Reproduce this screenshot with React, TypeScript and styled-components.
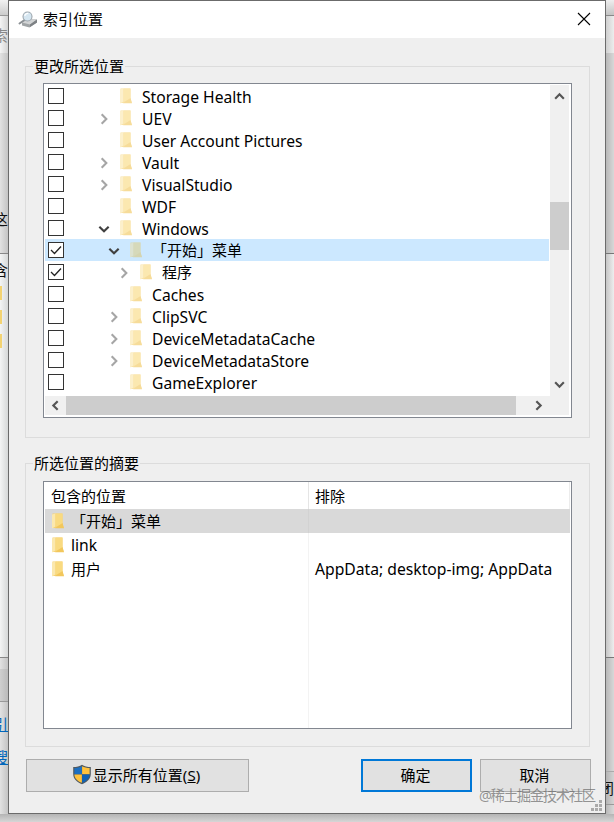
import React from 'react';
import styled, { createGlobalStyle, css } from 'styled-components';

const Global = createGlobalStyle`
  * { box-sizing: border-box; }
  body { margin: 0; overflow: hidden; background: #d9d9d9; }
`;

const Desktop = styled.div`
  width: 614px; height: 822px; position: relative; overflow: hidden;
  display: grid; grid-template-columns: 8px 598px 8px; grid-template-rows: 814px 8px;
  font: 15px/22px "Noto Sans", "Noto Sans CJK SC", sans-serif;
  color: #000;
`;

const Strip = styled.div`
  display: flex; flex-direction: column; height: 814px; min-width: 0;
`;

const Piece = styled.div<{ $h: number; $bg: string; $line?: string; $shift?: number; $color?: string; $underline?: boolean }>`
  flex: none; height: ${p => p.$h}px; background: ${p => p.$bg};
  display: flex; align-items: center; overflow: hidden; white-space: nowrap;
  justify-content: flex-end; text-indent: ${p => p.$shift ?? 0}px;
  color: ${p => p.$color ?? '#111'};
  text-decoration: ${p => (p.$underline ? 'underline' : 'none')};
  ${p => p.$line && css`border-bottom: 1px solid ${p.$line};`}
`;
const FolderEdge = styled.span`
  width: 2px; height: 14px; margin-right: auto; background: #f3d372;
`;

const BottomShade = styled.div`
  grid-column: 1 / -1; background: linear-gradient(#b4b4b4, #d6d6d6);
`;

const Dialog = styled.main`
  width: 598px; height: 814px; background: #efefef; border: 1px solid #6b6b6b;
  display: flex; flex-direction: column; align-items: stretch;
`;

const TitleBar = styled.header`
  height: 37px; flex: none; background: #fff; display: flex; align-items: center; padding: 0 14px 0 9px;
`;
const Title = styled.h1`
  flex: 1; margin: 0 0 1px 5px; font-size: 15px; font-weight: 400; line-height: 20px;
`;
const CloseButton = styled.button`
  border: 0; background: none; padding: 0; margin-bottom: 1px; display: flex;
`;

const Group = styled.fieldset<{ $h: number; $top: number }>`
  flex: none; min-width: 0; height: ${p => p.$h}px; margin: ${p => p.$top}px 15px 0 16px;
  padding: 0 17px; border: 1px solid #dcdcdc;
`;
const Legend = styled.legend`
  padding: 0 1px; margin-left: -10px; height: 22px; line-height: 22px;
`;

const Tree = styled.div`
  width: 529px; height: 335px; margin-top: 6px; border: 1px solid #828790; background: #fff;
  display: grid; grid-template-columns: 505px 20px; grid-template-rows: 311px 20px; padding: 1px;
`;
const Rows = styled.div`
  background: #fff; overflow: hidden;
`;
const Row = styled.div<{ $selected?: boolean }>`
  height: 22px; width: 504px; display: flex; align-items: center; padding-left: 3px;
  background: ${p => (p.$selected ? '#cce8ff' : 'transparent')};
`;
const Check = styled.span`
  width: 16px; height: 16px; flex: none; border: 1px solid #333; background: #fff; display: flex;
`;
const Arrow = styled.span<{ $level: number }>`
  width: 16px; height: 22px; flex: none; margin-left: ${p => 31.5 + p.$level * 10}px; margin-right: 0.5px;
  display: flex; align-items: center; justify-content: center; padding-top: 2px;
`;
const FolderSlot = styled.span`
  width: 14px; height: 16px; flex: none; margin-left: 7px; display: flex;
`;
const Label = styled.span<{ $latin: boolean }>`
  margin-left: 9px; white-space: pre; line-height: 22px; font-size: ${p => (p.$latin ? 15.65 : 15)}px;
  padding-top: ${p => (p.$latin ? 2 : 0)}px;
`;

const VBar = styled.div`
  background: #f0f0f0; width: 19px; display: flex; flex-direction: column; align-items: center;
`;
const HBar = styled.div`
  background: #f0f0f0; height: 19px; grid-column: 1 / -1; width: 524px; display: flex; align-items: center;
`;
const Cap = styled.span<{ $w: number; $h: number }>`
  width: ${p => p.$w}px; height: ${p => p.$h}px; flex: none; display: flex; align-items: center; justify-content: center;
  padding-right: 1px;
`;
const Thumb = styled.span<{ $w: number; $h: number }>`
  width: ${p => p.$w}px; height: ${p => p.$h}px; flex: none; background: #cdcdcd;
`;

const Table = styled.div`
  width: 529px; height: 248px; margin-top: 7px; border: 1px solid #828790; background: #fff; padding: 0 1px;
  display: flex; flex-direction: column;
`;
const TableRow = styled.div<{ $h?: number; $selected?: boolean }>`
  display: grid; grid-template-columns: 264px 1fr; height: ${p => p.$h ?? 24}px; flex: none;
  background: ${p => (p.$selected ? '#d9d9d9' : 'transparent')};
`;
const Cell = styled.div<{ $divider?: string; $latin?: boolean }>`
  display: flex; align-items: center; padding-left: 6px; white-space: pre;
  font-size: ${p => (p.$latin ? 15.7 : 15)}px;
  ${p => p.$divider && css`border-right: 1px solid ${p.$divider};`}
`;
const CellText = styled.span`
  margin-left: 6px;
`;
const Filler = styled.div`
  flex: 1; width: 264px; border-right: 1px solid #f3f3f3;
`;

const Actions = styled.footer`
  display: flex; gap: 8px; margin: 12px 14px 0 17px; height: 33px;
`;
const Button = styled.button<{ $w: number; $primary?: boolean; $push?: boolean }>`
  width: ${p => p.$w}px; height: 33px; padding: 0 2px 2px 0; background: #e1e1e1; color: #000; font: inherit;
  border: ${p => (p.$primary ? '2px solid #0078d7' : '1px solid #adadad')};
  display: flex; align-items: center; justify-content: center;
  margin-left: ${p => (p.$push ? 'auto' : '0')};
`;

const Watermark = styled.div`
  position: absolute; left: 479px; top: 786px; font-size: 14.4px; line-height: 20px; white-space: nowrap;
  letter-spacing: -1.35px; color: rgba(110, 110, 110, 0.72);
`;
const Grip = styled.svg`
  position: absolute; left: 591px; top: 800px;
`;

const Folder = ({ faded = true, tint }: { faded?: boolean; tint?: boolean }) => (
  <svg width="14" height="16" viewBox="0 0 14 16" opacity={faded ? 0.62 : 1}>
    <path d="M1.500 .5h10v10l1.300 4.500H1.500z" fill={tint ? '#d8cf96' : '#f5d071'} />
    <path d="M1 1.500L4.500 .5v13l-3.500 2z" fill={tint ? '#e6dfb5' : '#fbe8ae'} />
    <path d="M4.500 .5h7v10L4.500 14z" fill={tint ? '#ddd190' : '#f9da80'} />
    <path d="M11.500 10l1.500 5.200H4z" fill={tint ? '#d9c981' : '#f2c75c'} />
  </svg>
);

type Direction = 'up' | 'down' | 'left' | 'right';
const PATHS: Record<Direction, string> = {
  up: 'M2 8l4-4 4 4', down: 'M2 4l4 4 4-4', left: 'M8 2L4 6l4 4', right: 'M4 2l4 4-4 4',
};
const Chevron = ({ dir, color = '#555', size = 12, weight = 2 }: { dir: Direction; color?: string; size?: number; weight?: number }) => (
  <svg width={size} height={size} viewBox="0 0 12 12" fill="none" stroke={color} strokeWidth={weight}>
    <path d={PATHS[dir]} />
  </svg>
);

const DriveIcon = () => (
  <svg width="20" height="18" viewBox="0 0 20 18">
    <path d="M4 11.500l6-3.500 9 .5v3L11.500 16.500 4 14.500z" fill="#a0a4a6" />
    <path d="M4 11.500l6-3.500 9 .5-7 5z" fill="#d2d4d5" />
    <path d="M12 13.500l7-5V11.500L12 16z" fill="#7d8184" />
    <path d="M6.500 9L1.500 12.500" stroke="#8b9094" strokeWidth="2" strokeLinecap="round" />
    <circle cx="9.500" cy="5.500" r="4.500" fill="#d5e6f1" stroke="#9da6ad" strokeWidth="1.100" />
    <path d="M6.800 5a3 3 0 0 1 3.500-2.500" fill="none" stroke="#fff" strokeWidth="1.300" />
  </svg>
);

const Shield = () => (
  <svg width="20" height="21" viewBox="0 0 20 21">
    <path d="M9 .7C6.800 2.200 3.500 3 .2 3v7c0 5 4 8.300 8.800 10.200 4.800-1.900 8.800-5.200 8.800-10.200V3C14.500 3 11.200 2.200 9 .7z" fill="#515a60" />
    <path d="M8.900 2.200C6.800 3.400 4 4 1.400 4.100v6.100h7.500z" fill="#1d6fc0" />
    <path d="M9.100 2.200c2 1.200 4.900 1.800 7.500 1.900v6.100h-7.500z" fill="#ffc23c" />
    <path d="M1.400 10.400h7.500v8.400C4.500 17 1.500 14.500 1.400 10.400z" fill="#ffc23c" />
    <path d="M16.600 10.400h-7.500v8.400c4.400-1.800 7.400-4.300 7.500-8.400z" fill="#0f62b5" />
  </svg>
);

interface Node { name: string; level: number; arrow?: 'right' | 'down'; checked?: boolean; selected?: boolean }
const NODES: Node[] = [
  { name: 'Storage Health', level: 0 },
  { name: 'UEV', level: 0, arrow: 'right' },
  { name: 'User Account Pictures', level: 0 },
  { name: 'Vault', level: 0, arrow: 'right' },
  { name: 'VisualStudio', level: 0, arrow: 'right' },
  { name: 'WDF', level: 0 },
  { name: 'Windows', level: 0, arrow: 'down' },
  { name: '「开始」菜单', level: 1, arrow: 'down', checked: true, selected: true },
  { name: '程序', level: 2, arrow: 'right', checked: true },
  { name: 'Caches', level: 1 },
  { name: 'ClipSVC', level: 1, arrow: 'right' },
  { name: 'DeviceMetadataCache', level: 1, arrow: 'right' },
  { name: 'DeviceMetadataStore', level: 1, arrow: 'right' },
  { name: 'GameExplorer', level: 1 },
];

const LOCATIONS = [
  { name: '「开始」菜单', excluded: '', selected: true },
  { name: 'link', excluded: '' },
  { name: '用户', excluded: 'AppData; desktop-img; AppData' },
];

const isLatin = (s: string) => /^[\x20-\x7e]+$/.test(s);

const SHADE = 'linear-gradient(90deg, #e2e2e2, #c4c4c4)';
const PALE = 'linear-gradient(90deg, #f4f5f5, #d6d8d8)';
const SHADE_R = 'linear-gradient(90deg, #b8b8b8, #d8d8d8)';

export default function App() {
  return (
    <>
      <Global />
      <Desktop>
        <Strip>
          <Piece $h={16} $bg="linear-gradient(#f2f2f2, #cccccc)" $line="#999" />
          <Piece $h={37} $bg="linear-gradient(90deg, #f4f4f4, #d4d4d4)" $color="#888">索</Piece>
          <Piece $h={154} $bg={SHADE} />
          <Piece $h={23} $bg={SHADE}>这</Piece>
          <Piece $h={24} $bg={SHADE} $line="#888" />
          <Piece $h={4} $bg={PALE} />
          <Piece $h={24} $bg={PALE}>包含</Piece>
          <Piece $h={4} $bg={PALE} />
          <Piece $h={14} $bg={PALE}><FolderEdge /></Piece>
          <Piece $h={10} $bg={PALE} />
          <Piece $h={14} $bg={PALE}><FolderEdge /></Piece>
          <Piece $h={10} $bg={PALE} />
          <Piece $h={14} $bg={PALE}><FolderEdge /></Piece>
          <Piece $h={310} $bg={PALE} $line="#888" />
          <Piece $h={11} $bg={SHADE} />
          <Piece $h={33} $bg="linear-gradient(90deg, #cfcfcf, #bababa)" $line="#999" />
          <Piece $h={10} $bg={SHADE} />
          <Piece $h={24} $bg={SHADE} $color="#0066bb" $underline>引</Piece>
          <Piece $h={9} $bg={SHADE} />
          <Piece $h={24} $bg={SHADE} $color="#0066bb" $underline>搜</Piece>
          <Piece $h={45} $bg={SHADE} />
        </Strip>
        <Dialog>
          <TitleBar>
            <DriveIcon />
            <Title>索引位置</Title>
            <CloseButton aria-label="关闭">
              <svg width="14" height="14" viewBox="0 0 14 14" stroke="#000" strokeWidth="1.100"><path d="M1 1l12 12M13 1L1 13" /></svg>
            </CloseButton>
          </TitleBar>
          <Group $top={17} $h={383}>
            <Legend>更改所选位置</Legend>
            <Tree>
              <Rows>
                {NODES.map(n => (
                  <Row key={n.name} $selected={n.selected}>
                    <Check>
                      {n.checked && (
                        <svg width="14" height="14" viewBox="0 0 14 14" fill="none" stroke="#222" strokeWidth="1.300"><path d="M2 7l3.500 3.500L12 3.500" /></svg>
                      )}
                    </Check>
                    <Arrow $level={n.level}>
                      {n.arrow && <Chevron dir={n.arrow} size={14} weight={1.800} color={n.arrow === 'down' ? '#404040' : '#a6a6a6'} />}
                    </Arrow>
                    <FolderSlot><Folder tint={n.selected} /></FolderSlot>
                    <Label $latin={isLatin(n.name)}>{n.name}</Label>
                  </Row>
                ))}
              </Rows>
              <VBar>
                <Cap $w={19} $h={22}><Chevron dir="up" size={13} /></Cap>
                <Cap $w={19} $h={95} />
                <Thumb $w={19} $h={48} />
                <Cap $w={19} $h={123} />
                <Cap $w={19} $h={22}><Chevron dir="down" size={13} /></Cap>
              </VBar>
              <HBar>
                <Cap $w={21} $h={19}><Chevron dir="left" size={13} /></Cap>
                <Thumb $w={450} $h={19} />
                <Cap $w={12} $h={19} />
                <Cap $w={21} $h={19}><Chevron dir="right" size={13} /></Cap>
              </HBar>
            </Tree>
          </Group>
          <Group $top={14} $h={295}>
            <Legend>所选位置的摘要</Legend>
            <Table>
              <TableRow $h={27}>
                <Cell $divider="#e5e5e5">包含的位置</Cell>
                <Cell $divider="#ececec">排除</Cell>
              </TableRow>
              {LOCATIONS.map(l => (
                <TableRow key={l.name} $selected={l.selected}>
                  <Cell $divider={l.selected ? '#d2d2d2' : '#f3f3f3'} $latin={isLatin(l.name)}>
                    <Folder faded={false} /><CellText>{l.name}</CellText>
                  </Cell>
                  <Cell $latin>{l.excluded}</Cell>
                </TableRow>
              ))}
              <Filler />
            </Table>
          </Group>
          <Actions>
            <Button $w={223}><Shield /><span>显示所有位置(<u>S</u>)</span></Button>
            <Button $w={111} $primary $push>确定</Button>
            <Button $w={111}>取消</Button>
          </Actions>
        </Dialog>
        <Strip>
          <Piece $h={16} $bg="linear-gradient(#eeeeee, #c4c4c4)" $line="#888" />
          <Piece $h={37} $bg="linear-gradient(90deg, #d0d0d0, #ededed)" />
          <Piece $h={201} $bg={SHADE_R} $line="#777" />
          <Piece $h={404} $bg="linear-gradient(90deg, #c6c6c6, #eeeeee)" $line="#777" />
          <Piece $h={114} $bg={SHADE_R} $line="#aaa" />
          <Piece $h={33} $bg="linear-gradient(90deg, #b4b4b4, #d4d4d4)" $line="#999">闭</Piece>
          <Piece $h={9} $bg={SHADE_R} />
        </Strip>
        <BottomShade />
        <Watermark>@稀土掘金技术社区</Watermark>
        <Grip width="12" height="12" viewBox="0 0 12 12" fill="#aaa">
          <path d="M8 0h3v3H8zM4 4h3v3H4zM8 4h3v3H8zM0 8h3v3H0zM4 8h3v3H4zM8 8h3v3H8z" />
        </Grip>
      </Desktop>
    </>
  );
}
